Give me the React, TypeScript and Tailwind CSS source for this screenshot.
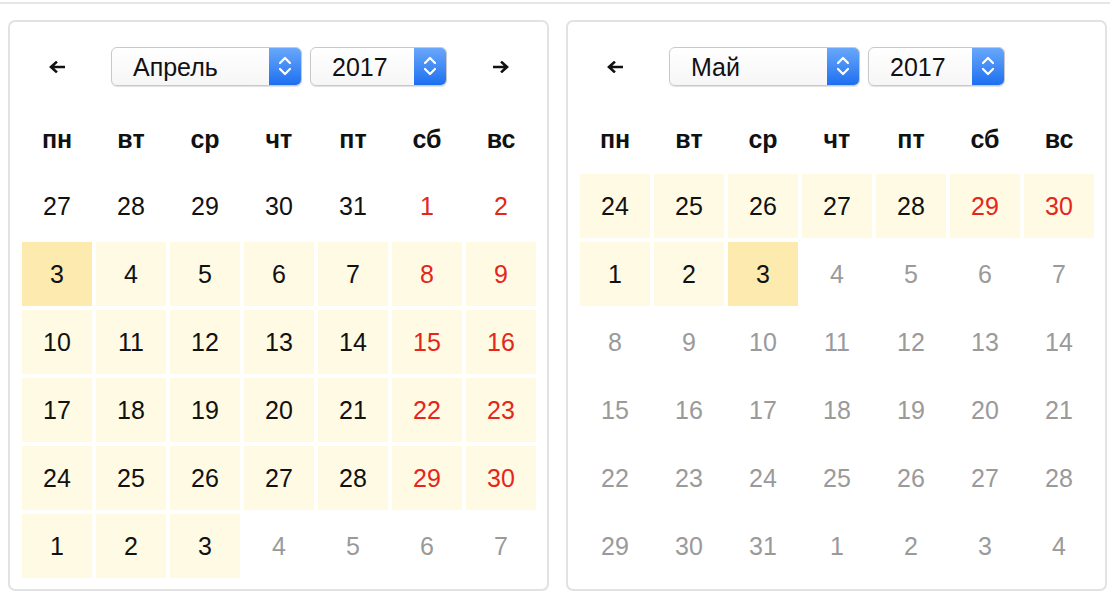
type Cell = { n: number; bg?: "range" | "sel"; color?: "red" | "gray" };

const WEEKDAYS = ["пн", "вт", "ср", "чт", "пт", "сб", "вс"];

function row(nums: number[], bg: Cell["bg"], redWeekend = true, grayFrom = 99): Cell[] {
  return nums.map((n, i) => {
    if (i >= grayFrom) return { n, color: "gray" as const };
    return { n, bg, color: redWeekend && i >= 5 ? ("red" as const) : undefined };
  });
}

const april: Cell[][] = [
  row([27, 28, 29, 30, 31, 1, 2], undefined),
  row([3, 4, 5, 6, 7, 8, 9], "range").map((c, i) => (i === 0 ? { ...c, bg: "sel" as const } : c)),
  row([10, 11, 12, 13, 14, 15, 16], "range"),
  row([17, 18, 19, 20, 21, 22, 23], "range"),
  row([24, 25, 26, 27, 28, 29, 30], "range"),
  row([1, 2, 3, 4, 5, 6, 7], "range", false, 3),
];

const may: Cell[][] = [
  row([24, 25, 26, 27, 28, 29, 30], "range"),
  row([1, 2, 3, 4, 5, 6, 7], "range", false, 3).map((c, i) => (i === 2 ? { ...c, bg: "sel" as const } : c)),
  row([8, 9, 10, 11, 12, 13, 14], undefined, false, 0),
  row([15, 16, 17, 18, 19, 20, 21], undefined, false, 0),
  row([22, 23, 24, 25, 26, 27, 28], undefined, false, 0),
  row([29, 30, 31, 1, 2, 3, 4], undefined, false, 0),
];

function Arrow({ dir }: { dir: "left" | "right" }) {
  return (
    <svg width="16" height="12" viewBox="0 0 16 12" className={dir === "left" ? "rotate-180" : ""}>
      <path d="M1 6H13.5M9 1.5L14 6L9 10.5" fill="none" stroke="#111" strokeWidth="2.6" strokeLinecap="square" />
    </svg>
  );
}

function Select({ value, width }: { value: string; width: string }) {
  return (
    <div
      className={`${width} flex h-[39px] overflow-hidden rounded-[6px] border border-[#c9c9c9] bg-gradient-to-b from-white to-[#f6f6f6] shadow-[0_1px_1px_rgba(0,0,0,0.12)]`}
    >
      <div className="flex flex-1 items-center pl-[21px] pt-[2px] text-[25px] leading-none text-[#111]">{value}</div>
      <div className="flex w-[32px] items-center justify-center bg-gradient-to-b from-[#68a7fa] to-[#1b6ff0]">
        <svg width="18" height="30" viewBox="0 0 18 30">
          <path d="M4 12L9 7L14 12M4 18L9 23L14 18" fill="none" stroke="white" strokeWidth="2.2" strokeLinecap="round" strokeLinejoin="round" />
        </svg>
      </div>
    </div>
  );
}

function Calendar({ month, rows, showNext }: { month: string; rows: Cell[][]; showNext: boolean }) {
  return (
    <div className="w-[541px] rounded-[7px] border-2 border-[#e2e2e2] bg-white pb-[11px] pl-[12px] pr-[11px] pt-[12px]">
      <div className="flex h-[64px] items-center justify-between">
        <div className="flex w-[70px] justify-center pt-[2px]">
          <Arrow dir="left" />
        </div>
        <div className="flex gap-[8px]">
          <Select value={month} width="w-[191px]" />
          <Select value="2017" width="w-[137px]" />
        </div>
        <div className={`flex w-[70px] justify-center pt-[2px] ${showNext ? "" : "invisible"}`}>
          <Arrow dir="right" />
        </div>
      </div>
      <div className="mt-[10px] grid h-[62px] grid-cols-7 gap-[4px]">
        {WEEKDAYS.map((d) => (
          <div key={d} className="flex items-center justify-center pt-[2px] text-[25px] font-bold text-[#111]">
            {d}
          </div>
        ))}
      </div>
      <div className="mt-[4px] grid grid-cols-7 gap-[4px]">
        {rows.flat().map((c, i) => (
          <div
            key={i}
            className={`flex h-[64px] items-center justify-center pt-[2px] text-[25px] ${
              c.bg === "sel" ? "bg-[#fdeaae]" : c.bg === "range" ? "bg-[#fefae3]" : ""
            } ${c.color === "red" ? "text-[#e4261c]" : c.color === "gray" ? "text-[#9a9a9a]" : "text-[#111]"}`}
          >
            {c.n}
          </div>
        ))}
      </div>
    </div>
  );
}

export default function App() {
  return (
    <div className="h-[604px] w-[1120px] bg-white" style={{ fontFamily: '"Liberation Sans", Arial, sans-serif' }}>
      <div className="h-[2px] w-[1110px] translate-y-[2px] bg-[#e6e6e6]" />
      <div className="ml-[8px] mt-[18px] flex gap-[17px]">
        <Calendar month="Апрель" rows={april} showNext />
        <Calendar month="Май" rows={may} showNext={false} />
      </div>
    </div>
  );
}
